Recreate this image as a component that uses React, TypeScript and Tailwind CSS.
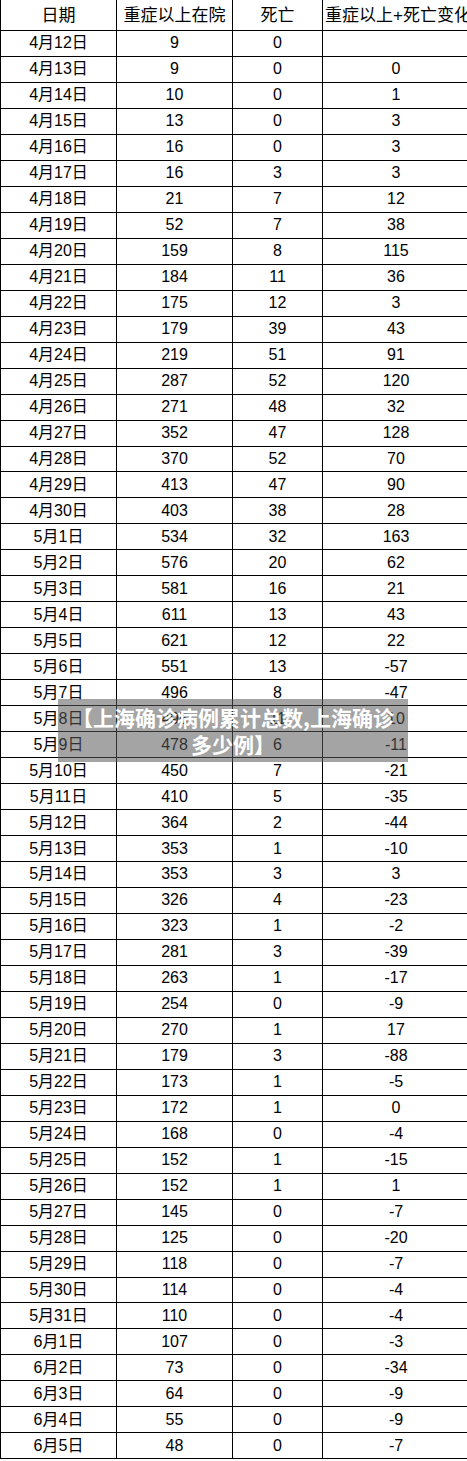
import React from "react";

const rows: [string, string, string, string][] = [
  ["4月12日", "9", "0", ""],
  ["4月13日", "9", "0", "0"],
  ["4月14日", "10", "0", "1"],
  ["4月15日", "13", "0", "3"],
  ["4月16日", "16", "0", "3"],
  ["4月17日", "16", "3", "3"],
  ["4月18日", "21", "7", "12"],
  ["4月19日", "52", "7", "38"],
  ["4月20日", "159", "8", "115"],
  ["4月21日", "184", "11", "36"],
  ["4月22日", "175", "12", "3"],
  ["4月23日", "179", "39", "43"],
  ["4月24日", "219", "51", "91"],
  ["4月25日", "287", "52", "120"],
  ["4月26日", "271", "48", "32"],
  ["4月27日", "352", "47", "128"],
  ["4月28日", "370", "52", "70"],
  ["4月29日", "413", "47", "90"],
  ["4月30日", "403", "38", "28"],
  ["5月1日", "534", "32", "163"],
  ["5月2日", "576", "20", "62"],
  ["5月3日", "581", "16", "21"],
  ["5月4日", "611", "13", "43"],
  ["5月5日", "621", "12", "22"],
  ["5月6日", "551", "13", "-57"],
  ["5月7日", "496", "8", "-47"],
  ["5月8日", "495", "11", "10"],
  ["5月9日", "478", "6", "-11"],
  ["5月10日", "450", "7", "-21"],
  ["5月11日", "410", "5", "-35"],
  ["5月12日", "364", "2", "-44"],
  ["5月13日", "353", "1", "-10"],
  ["5月14日", "353", "3", "3"],
  ["5月15日", "326", "4", "-23"],
  ["5月16日", "323", "1", "-2"],
  ["5月17日", "281", "3", "-39"],
  ["5月18日", "263", "1", "-17"],
  ["5月19日", "254", "0", "-9"],
  ["5月20日", "270", "1", "17"],
  ["5月21日", "179", "3", "-88"],
  ["5月22日", "173", "1", "-5"],
  ["5月23日", "172", "1", "0"],
  ["5月24日", "168", "0", "-4"],
  ["5月25日", "152", "1", "-15"],
  ["5月26日", "152", "1", "1"],
  ["5月27日", "145", "0", "-7"],
  ["5月28日", "125", "0", "-20"],
  ["5月29日", "118", "0", "-7"],
  ["5月30日", "114", "0", "-4"],
  ["5月31日", "110", "0", "-4"],
  ["6月1日", "107", "0", "-3"],
  ["6月2日", "73", "0", "-34"],
  ["6月3日", "64", "0", "-9"],
  ["6月4日", "55", "0", "-9"],
  ["6月5日", "48", "0", "-7"],
];

const font = {
  fontFamily: '"Liberation Sans", "Noto Sans CJK SC", sans-serif',
};

export default function App() {
  return (
    <div
      className="relative w-[467px] h-[1461px] overflow-hidden bg-white text-black"
      style={font}
    >
      <div className="w-[469px] border-l border-black">
        <div className="grid grid-cols-[116px_116px_90px_146px] h-[31px] border-b border-black text-[17px] leading-none">
          <div className="flex items-center justify-center border-r border-black">日期</div>
          <div className="flex items-center justify-center border-r border-black">重症以上在院</div>
          <div className="flex items-center justify-center border-r border-black">死亡</div>
          <div className="flex items-center justify-start pl-[2px] whitespace-nowrap overflow-hidden">
            重症以上+死亡变化
          </div>
        </div>
        {rows.map((r) => (
          <div
            key={r[0]}
            className="grid grid-cols-[116px_116px_90px_146px] h-[25.98px] border-b border-black text-[16px] leading-none"
          >
            <div className="flex items-center justify-center border-r border-black">{r[0]}</div>
            <div className="flex items-center justify-center border-r border-black">{r[1]}</div>
            <div className="flex items-center justify-center border-r border-black">{r[2]}</div>
            <div className="flex items-center justify-center">{r[3]}</div>
          </div>
        ))}
      </div>
      <div className="absolute left-[58px] top-[699px] w-[350px] h-[63px] bg-[rgba(90,90,90,0.55)] flex flex-col items-center justify-center text-white font-bold text-[21px] leading-[27px]">
        <span className="whitespace-nowrap" style={{ fontFamily: '"Noto Sans CJK SC", sans-serif' }}>
          【上海确诊病例累计总数,上海确诊
        </span>
        <span className="whitespace-nowrap" style={{ fontFamily: '"Noto Sans CJK SC", sans-serif' }}>
          多少例】
        </span>
      </div>
    </div>
  );
}
